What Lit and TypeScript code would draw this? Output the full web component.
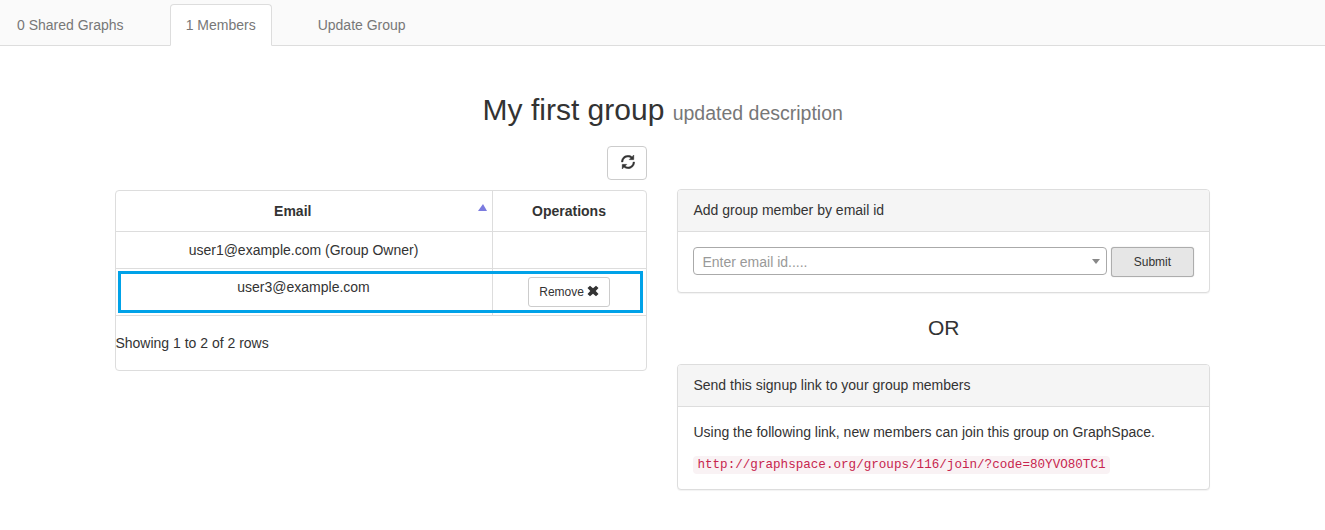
import { LitElement, html, css, svg } from "lit";
import { customElement, property, state } from "lit/decorators.js";
import { classMap } from "lit/directives/class-map.js";

const refreshIcon = svg`<g transform="translate(0 960) scale(1 -1)" stroke="currentColor" stroke-width="30"><path d="M947 1060l135 135q7 7 12.5 5t5.5 -13v-362q0 -10 -7.5 -17.5t-17.5 -7.5h-362q-11 0 -13 5.5t5 12.5l133 133q-109 76 -238 76q-116 0 -214.5 -57t-155.5 -155.5t-57 -214.5h-150q0 117 45.5 224t123 184.5t184.5 123t224 45.5q192 0 347 -117zM1027 600h150q0 -117 -45.5 -224t-123 -184.5t-184.5 -123t-224 -45.5q-192 0 -348 118l-134 -134q-7 -8 -12.5 -5.5t-5.5 12.5v360q0 11 7.5 18.5t17.5 7.5h360q10 0 12.5 -5.5t-5.5 -12.5l-130 -130q110 -79 240 -79q116 0 214.5 57t155.5 155.5t57 214.5z"/></g>`;

@customElement("group-panel")
class GroupPanel extends LitElement {
  @property() heading = "";

  static styles = css`
    :host {
      display: block;
      border: 1px solid #ddd;
      border-radius: 4px;
      background: #fff;
      box-shadow: 0 1px 1px rgba(0, 0, 0, 0.05);
    }
    .heading {
      padding: 10px 15px;
      height: 21px;
      line-height: 20px;
      background: #f5f5f5;
      border-bottom: 1px solid #ddd;
      border-radius: 3px 3px 0 0;
    }
    .body {
      padding: 15px;
    }
  `;

  render() {
    return html`
      <div class="heading">${this.heading}</div>
      <div class="body"><slot></slot></div>
    `;
  }
}

@customElement("app-root")
class AppRoot extends LitElement {
  @state() private active = 1;

  private tabs = ["0 Shared Graphs", "1 Members", "Update Group"];

  static styles = css`
    :host {
      display: block;
      height: 530px;
      overflow: hidden;
      background: #fff;
      color: #333;
      font: 14px/20px "Liberation Sans", Arial, sans-serif;
    }
    * {
      box-sizing: border-box;
    }
    button {
      font-family: inherit;
      color: #333;
      background: #fff;
      border: 1px solid #ccc;
      margin: 0;
    }
    svg {
      display: block;
      fill: currentColor;
    }
    .tabs {
      display: flex;
      align-items: flex-end;
      gap: 30px;
      height: 46px;
      padding-left: 1px;
      background: #fafafa;
      border-bottom: 1px solid #ddd;
    }
    .tab {
      height: 42px;
      margin-bottom: -1px;
      padding: 10px 15px;
      border: 1px solid transparent;
      border-radius: 4px 4px 0 0;
      color: #777;
      white-space: nowrap;
    }
    .tab.active {
      background: #fff;
      border-color: #ddd #ddd #fff;
    }
    .title {
      margin: 47px 0 20px;
      padding-left: 0.5px;
      font-size: 30px;
      line-height: 33px;
      font-weight: 400;
      text-align: center;
    }
    .title small {
      font-size: 19.5px;
      line-height: 1;
      color: #777;
    }
    .columns {
      display: grid;
      grid-template-columns: 532.48px 1fr;
      gap: 30px;
      padding: 0 115px 0 114.98px;
    }
    .toolbar {
      display: flex;
      justify-content: flex-end;
      margin-bottom: 10px;
    }
    .refresh {
      width: 40px;
      height: 34px;
      padding: 0 11px 2px 13px;
      border-radius: 4px;
    }
    .table {
      border: 1px solid #ddd;
      border-radius: 4px;
      height: 181px;
    }
    .row {
      display: grid;
      grid-template-columns: 375.6px 1fr;
      border-bottom: 1px solid #ddd;
      text-align: center;
    }
    .cell {
      padding: 8px 8.5px 8px 8px;
    }
    .cell + .cell {
      border-left: 1px solid #ddd;
    }
    .head {
      height: 41px;
      font-weight: 700;
    }
    .head .cell {
      padding: 10px 9px 10px 8px;
    }
    .head .sorted {
      position: relative;
      padding-right: 30px;
    }
    .arrow {
      position: absolute;
      right: 5px;
      top: 13px;
      border: 4.5px solid transparent;
      border-left-width: 5px;
      border-right-width: 4px;
      border-top: 0;
      border-bottom: 7px solid #7b7bdf;
    }
    .owner {
      height: 37px;
    }
    .member {
      position: relative;
      height: 47px;
    }
    .highlight {
      position: absolute;
      inset: 2px 3px 2px 2px;
      border: 3px solid #00a2e8;
      pointer-events: none;
    }
    .remove {
      display: inline-flex;
      align-items: center;
      gap: 3px;
      width: 82px;
      height: 30px;
      padding: 0 10px;
      border-radius: 3px;
      font-size: 12px;
      line-height: 18px;
    }
    .remove svg {
      flex: none;
      margin-top: -2px;
    }
    .summary {
      margin-left: -0.6px;
      padding-top: 17px;
    }
    .right {
      padding-top: 43px;
    }
    .form {
      display: flex;
      align-items: flex-start;
      gap: 4px;
      height: 30px;
    }
    .select {
      display: flex;
      align-items: center;
      justify-content: space-between;
      flex: 1;
      height: 28px;
      padding: 1px 6px 0 8px;
      border: 1px solid #aaa;
      border-radius: 4px;
      color: #999;
    }
    .caret {
      border: 4px solid transparent;
      border-top: 5px solid #888;
      border-bottom: 0;
    }
    .submit {
      width: 83.2px;
      height: 30px;
      border-color: #adadad;
      border-radius: 3px;
      background: #e6e6e6;
      font-size: 12px;
      box-shadow: 0 0 1px rgba(0, 0, 0, 0.3);
    }
    .or {
      margin: 20px 0 21px;
      font-size: 21px;
      line-height: 30px;
      text-align: center;
    }
    .note {
      margin: 0 0 10px;
    }
    .link {
      display: flex;
      height: 22px;
    }
    code {
      height: 18px;
      padding: 2px 4px;
      border-radius: 4px;
      background: #f9f2f4;
      color: #c7254e;
      font: 12.6px/14px "Liberation Mono", monospace;
      margin-top: 4px;
    }
  `;

  render() {
    return html`
      <nav class="tabs">
        ${this.tabs.map(
          (label, i) => html`<a
            class=${classMap({ tab: true, active: i === this.active })}
            @click=${() => (this.active = i)}
            >${label}</a
          >`
        )}
      </nav>
      <h1 class="title">My first group <small>updated description</small></h1>
      <main class="columns">
        <section>
          <div class="toolbar">
            <button class="refresh" aria-label="Refresh">
              <svg width="14" height="14" viewBox="0 -240 1200 1200">${refreshIcon}</svg>
            </button>
          </div>
          <div class="table">
            <div class="row head">
              <div class="cell sorted">Email<span class="arrow"></span></div>
              <div class="cell">Operations</div>
            </div>
            <div class="row owner">
              <div class="cell">user1@example.com (Group Owner)</div>
              <div class="cell"></div>
            </div>
            <div class="row member">
              <div class="cell">user3@example.com</div>
              <div class="cell">
                <button class="remove">
                  Remove
                  <svg width="12" height="12" viewBox="0 0 12 12">
                    <path d="M3 .8L6 3.3L9 .8L11.5 3L8.7 6L11.5 9L9 11.2L6 8.7L3 11.2L.5 9L3.3 6L.5 3Z" />
                  </svg>
                </button>
              </div>
              <span class="highlight"></span>
            </div>
            <div class="summary">Showing 1 to 2 of 2 rows</div>
          </div>
        </section>
        <section class="right">
          <group-panel heading="Add group member by email id">
            <div class="form">
              <div class="select">Enter email id.....<span class="caret"></span></div>
              <button class="submit">Submit</button>
            </div>
          </group-panel>
          <div class="or">OR</div>
          <group-panel heading="Send this signup link to your group members">
            <p class="note">Using the following link, new members can join this group on GraphSpace.</p>
            <div class="link"><code>http://graphspace.org/groups/116/join/?code=80YVO80TC1</code></div>
          </group-panel>
        </section>
      </main>
    `;
  }
}
